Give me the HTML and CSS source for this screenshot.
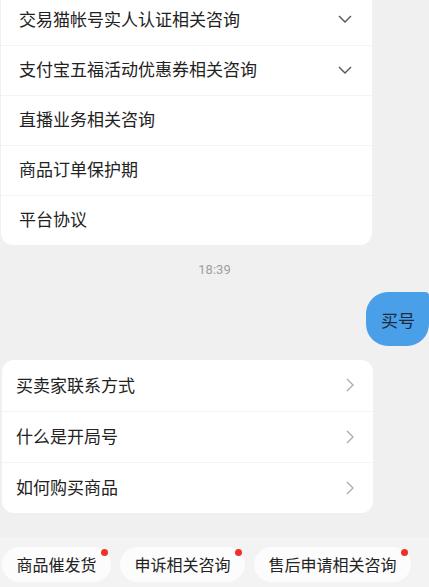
FILE: index.html
```html
<!DOCTYPE html>
<html lang="zh-CN">
<head>
    <meta charset="UTF-8">
    <meta name="viewport" content="width=device-width, initial-scale=1.0">
    <title>客服</title>
    <link rel="stylesheet" href="styles.css">
</head>
<body>
    <div class="chat">
        <div class="card card-top">
            <div class="row">
                <span>交易猫帐号实人认证相关咨询</span>
                <svg class="down" width="14" height="8" viewBox="0 0 14 8"><path d="M1 1l6 6 6-6" fill="none" stroke="#555" stroke-width="1.4"/></svg>
            </div>
            <div class="row">
                <span>支付宝五福活动优惠券相关咨询</span>
                <svg class="down" width="14" height="8" viewBox="0 0 14 8"><path d="M1 1l6 6 6-6" fill="none" stroke="#555" stroke-width="1.4"/></svg>
            </div>
            <div class="row"><span>直播业务相关咨询</span></div>
            <div class="row"><span>商品订单保护期</span></div>
            <div class="row"><span>平台协议</span></div>
        </div>

        <div class="time">18:39</div>

        <div class="me">
            <div class="bubble">买号</div>
        </div>

        <div class="card card-faq">
            <div class="row">
                <span>买卖家联系方式</span>
                <svg class="right" width="8" height="14" viewBox="0 0 8 14"><path d="M1 1l6 6-6 6" fill="none" stroke="#aaa" stroke-width="1.3"/></svg>
            </div>
            <div class="row">
                <span>什么是开局号</span>
                <svg class="right" width="8" height="14" viewBox="0 0 8 14"><path d="M1 1l6 6-6 6" fill="none" stroke="#aaa" stroke-width="1.3"/></svg>
            </div>
            <div class="row">
                <span>如何购买商品</span>
                <svg class="right" width="8" height="14" viewBox="0 0 8 14"><path d="M1 1l6 6-6 6" fill="none" stroke="#aaa" stroke-width="1.3"/></svg>
            </div>
        </div>
    </div>

    <div class="quick">
        <div class="chip">商品催发货<i class="dot"></i></div>
        <div class="chip">申诉相关咨询<i class="dot"></i></div>
        <div class="chip">售后申请相关咨询<i class="dot"></i></div>
    </div>
</body>
</html>
```

FILE: styles.css
```css
body {
    margin: 0;
    height: 587px;
    overflow: hidden;
    background: #f0f0f0;
    font-family: "Noto Sans CJK SC", "Noto Sans", sans-serif;
    color: #222;
}
.chat {
    height: 537px;
    overflow: hidden;
}
.card {
    background: #fff;
    width: 371px;
    border-radius: 12px;
}
.card-top {
    margin: -5px 0 0 1px;
    border-radius: 0 0 12px 12px;
}
.card-faq {
    margin: 14px 0 0 2px;
}
.row {
    display: flex;
    align-items: center;
    justify-content: space-between;
    height: 50px;
    padding: 0 20px 4px 18px;
    font-size: 17px;
    border-top: 1px solid #f4f4f4;
    box-sizing: border-box;
}
.row:first-child {
    border-top: none;
}
.row svg {
    margin-top: 2px;
}
.card-faq .row {
    height: 51px;
    padding: 0 19px 3px 14px;
}
.time {
    margin-top: 16px;
    text-align: center;
    font-size: 13px;
    line-height: 18px;
    color: #a0a0a0;
    font-family: Roboto, "Noto Sans", sans-serif;
}
.me {
    display: flex;
    justify-content: flex-end;
    margin-top: 13px;
}
.bubble {
    background: #4a9fe9;
    color: #1d2a3a;
    font-size: 17px;
    line-height: 25px;
    padding: 15px 14px 14px 15px;
    border-radius: 22px 4px 22px 22px;
}
.card-faq {
    margin-top: 14px;
}
.quick {
    display: flex;
    gap: 9px;
    height: 50px;
    padding: 10px 0 0 2px;
    box-sizing: border-box;
    background: #f3f3f3;
}
.chip {
    position: relative;
    height: 35px;
    line-height: 35px;
    padding: 0 14.5px;
    border-radius: 18px;
    background: #fcfcfc;
    font-size: 16px;
    color: #222;
    white-space: nowrap;
}
.dot {
    position: absolute;
    top: 2px;
    right: 3px;
    width: 7px;
    height: 7px;
    border-radius: 50%;
    background: #f0302e;
}
```
